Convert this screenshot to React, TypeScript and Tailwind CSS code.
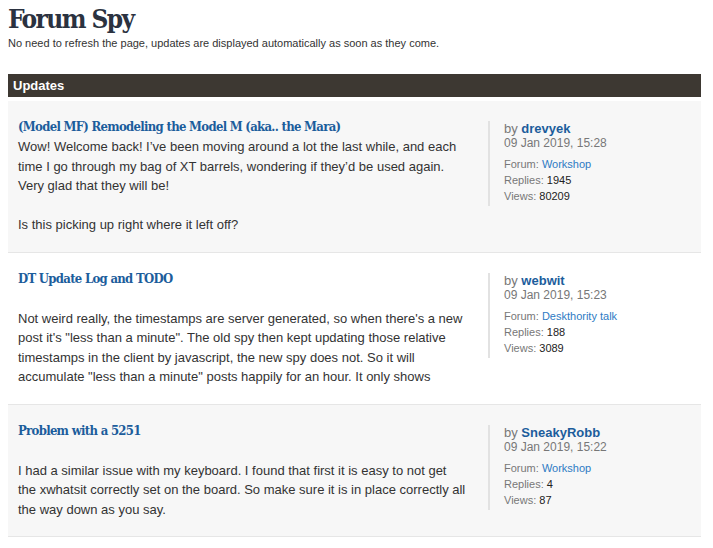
const POSTS = [
  {
    title: "(Model MF) Remodeling the Model M (aka.. the Mara)",
    lead: false,
    body: [
      [
        "Wow! Welcome back! I\u2019ve been moving around a lot the last while, and each",
        "time I go through my bag of XT barrels, wondering if they\u2019d be used again.",
        "Very glad that they will be!",
      ],
      ["Is this picking up right where it left off?"],
    ],
    user: "drevyek",
    date: "09 Jan 2019, 15:28",
    forum: "Workshop",
    replies: "1945",
    views: "80209",
  },
  {
    title: "DT Update Log and TODO",
    lead: true,
    body: [
      [
        "Not weird really, the timestamps are server generated, so when there's a new",
        'post it\'s "less than a minute". The old spy then kept updating those relative',
        "timestamps in the client by javascript, the new spy does not. So it will",
        'accumulate "less than a minute" posts happily for an hour. It only shows',
      ],
    ],
    user: "webwit",
    date: "09 Jan 2019, 15:23",
    forum: "Deskthority talk",
    replies: "188",
    views: "3089",
  },
  {
    title: "Problem with a 5251",
    lead: true,
    body: [
      [
        "I had a similar issue with my keyboard. I found that first it is easy to not get",
        "the xwhatsit correctly set on the board. So make sure it is in place correctly all",
        "the way down as you say.",
      ],
    ],
    user: "SneakyRobb",
    date: "09 Jan 2019, 15:22",
    forum: "Workshop",
    replies: "4",
    views: "87",
  },
];

export default function App() {
  return (
    <div className="min-h-[548px] bg-white px-2 pt-[3px] font-['Liberation_Sans',Arial,sans-serif] text-[#333]">
      <h1 className="font-['DejaVu_Serif_Condensed','DejaVu_Serif',serif] text-[26px] font-bold leading-[32px] tracking-[-1.6px] text-[#2b3240]">
        Forum Spy
      </h1>
      <p className="mt-[1px] text-[11px] leading-[14px] text-[#333]">
        No need to refresh the page, updates are displayed automatically as soon as they come.
      </p>

      <div className="mt-[24px] w-[693px]">
        <div className="bg-[#3d3832] px-[5px] text-[13px] font-bold leading-[23px] text-white">
          Updates
        </div>
        <div className="pt-[4px]">
          {POSTS.map((p, i) => (
            <div
              key={i}
              className={`flex border-b border-[#e6e6e6] pl-[10px] pt-[16px] pb-[17px] ${
                i % 2 === 0 ? "bg-[#f7f7f7]" : "bg-white"
              }`}
            >
              <div className="w-[456px] text-[13px] leading-[19.5px]">
                <a className="block font-['DejaVu_Serif_Condensed','DejaVu_Serif',serif] text-[13px] font-bold leading-[20px] tracking-[-0.7px] text-[#1c5d9c]">
                  {p.title}
                </a>
                {p.lead && <div className="h-[20px]" />}
                {p.body.map((para, j) => (
                  <p key={j} className={`whitespace-nowrap ${j > 0 ? "mt-[19.5px]" : ""}`}>
                    {para.map((line, k) => (
                      <span key={k} className="block">
                        {line}
                      </span>
                    ))}
                  </p>
                ))}
              </div>
              <div className="mt-[4px] ml-[14px] self-start border-l-2 border-[#e2e2e2] pl-[14px] pb-[2px] text-[11px] leading-[16px] text-[#777]">
                <div className="text-[13px] leading-[15px]">
                  by <span className="font-bold text-[#1c5d9c]">{p.user}</span>
                </div>
                <div className="text-[12px] leading-[14px]">{p.date}</div>
                <div className="mt-[6px]">
                  Forum: <span className="text-[#2e7bc4]">{p.forum}</span>
                </div>
                <div>
                  Replies: <span className="text-[#222]">{p.replies}</span>
                </div>
                <div>
                  Views: <span className="text-[#222]">{p.views}</span>
                </div>
              </div>
            </div>
          ))}
        </div>
      </div>
    </div>
  );
}
